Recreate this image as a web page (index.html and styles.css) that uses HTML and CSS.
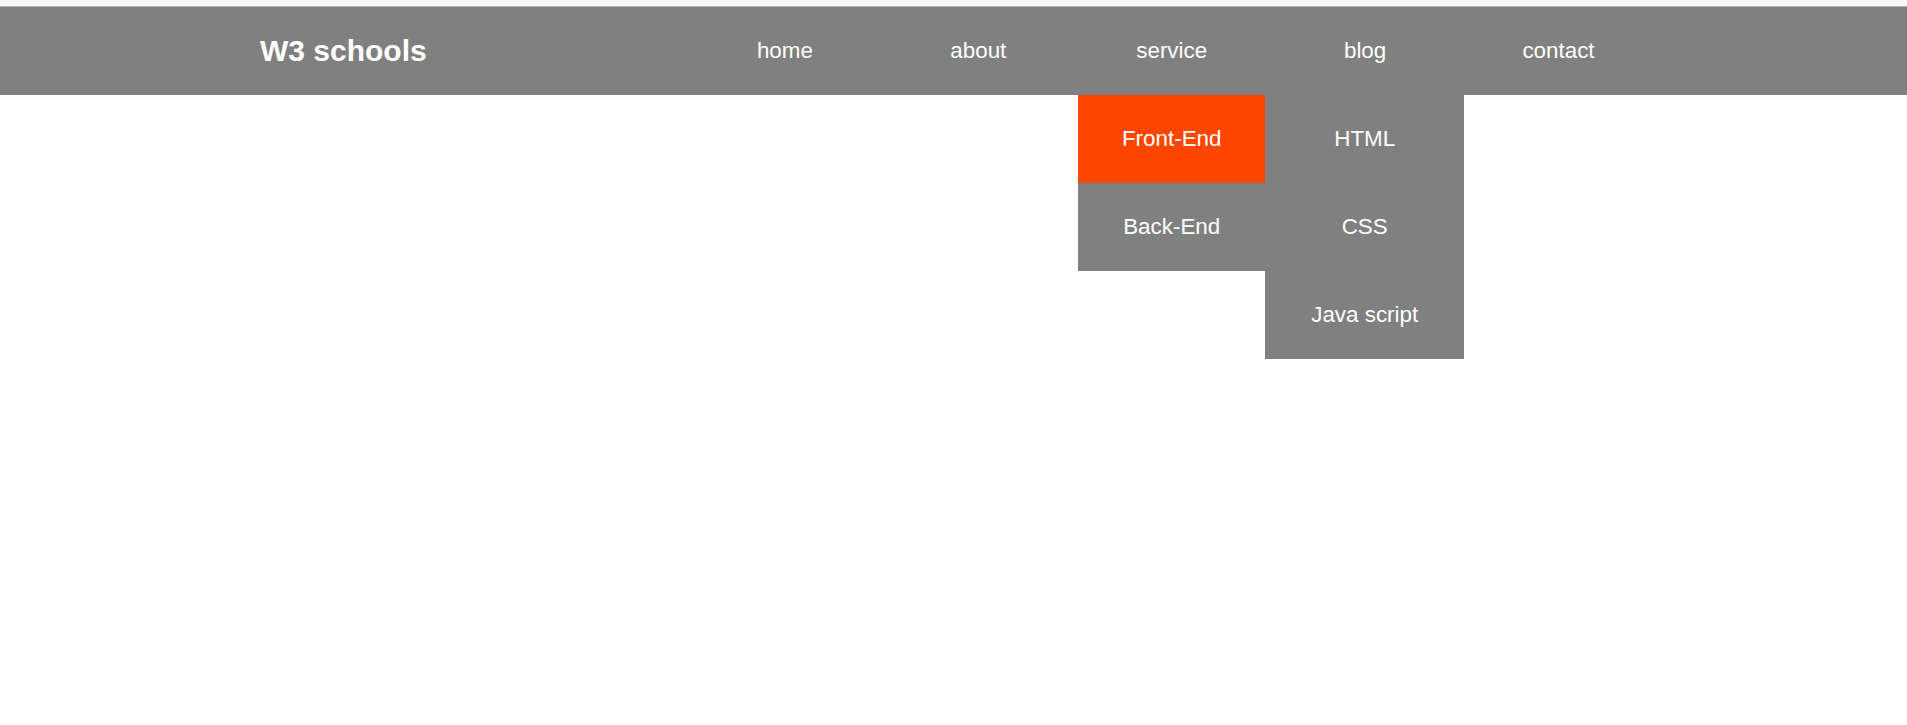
FILE: index.html
```html
<!DOCTYPE html>
<html lang="en">
<head>
  <meta charset="UTF-8">
  <meta name="viewport" content="width=device-width, initial-scale=1.0">
  <title>W3 schools - dropdown menu</title>
  <link rel="stylesheet" href="styles.css">
</head>
<body>
  <div class="top-strip"></div>
  <header class="header-bar">
    <div class="logo">W3 schools</div>
    <ul class="menu">
      <li><a href="#">home</a></li>
      <li><a href="#">about</a></li>
      <li>
        <a href="#">service</a>
        <div class="level-two">
          <a href="#" class="current">Front-End</a>
          <div class="level-three">
            <a href="#">HTML</a>
            <a href="#">CSS</a>
            <a href="#">Java script</a>
          </div>
          <a href="#" class="back-end">Back-End</a>
        </div>
      </li>
      <li><a href="#">blog</a></li>
      <li><a href="#">contact</a></li>
    </ul>
  </header>
</body>
</html>
```

FILE: styles.css
```css
* {
  box-sizing: border-box;
}
html, body {
  margin: 0;
  padding: 0;
  background: #fff;
  font-family: 'Liberation Sans', Arial, sans-serif;
}
.top-strip {
  height: 7px;
  background: #f8f8fa;
  border-bottom: 1px solid #b4b4b4;
}
/* only the top 88px of the header is the gray bar, the open menu hangs below it */
.header-bar {
  display: flex;
  align-items: flex-start;
  padding: 0 255px 0 260px;
  background: linear-gradient(gray, gray) top left / 100% 88px no-repeat;
}
.logo {
  display: flex;
  align-items: center;
  height: 88px;
  color: #fff;
  font-size: 30px;
  font-weight: bold;
}
.menu {
  list-style: none;
  margin: 0 0 0 auto;
  padding: 0;
  display: flex;
  align-items: flex-start;
  gap: 6.4px;
}
.menu li {
  width: 187px;
}
.menu a {
  display: flex;
  align-items: center;
  justify-content: center;
  height: 88px;
  color: #fff;
  text-decoration: none;
  font-size: 22.4px;
}
.level-two {
  display: grid;
  grid-template-columns: 187px 199px;
  grid-auto-rows: 88px;
}
.level-two > a {
  background: gray;
}
.level-two .back-end {
  grid-column: 1;
  grid-row: 2;
}
.level-three {
  grid-column: 2;
  grid-row: 1 / span 3;
  background: gray;
}
.menu a.current {
  background: orangered;
}
```
